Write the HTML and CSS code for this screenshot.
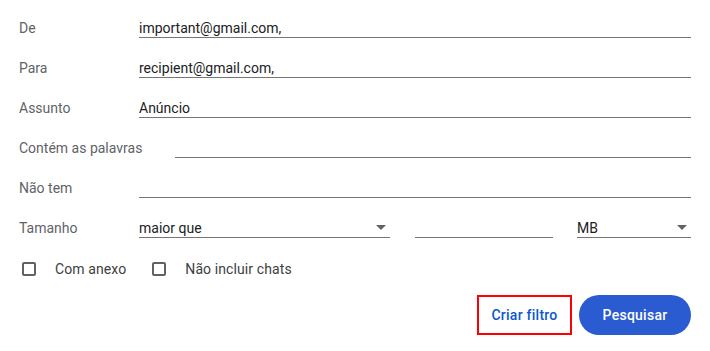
FILE: index.html
```html
<!DOCTYPE html>
<html lang="pt">

<head>
  <meta charset="UTF-8">
  <meta name="viewport" content="width=device-width, initial-scale=1.0">
  <title>Pesquisa</title>
  <link rel="stylesheet" href="styles.css">
</head>

<body>
  <form class="search">
    <div class="row">
      <label class="label" for="from">De</label>
      <input class="field" type="text" id="from" value="important@gmail.com," />
    </div>
    <div class="row">
      <label class="label" for="to">Para</label>
      <input class="field" type="text" id="to" value="recipient@gmail.com," />
    </div>
    <div class="row">
      <label class="label" for="subject">Assunto</label>
      <input class="field" type="text" id="subject" value="Anúncio" />
    </div>
    <div class="row">
      <label class="label" for="words">Contém as palavras</label>
      <input class="field" type="text" id="words" />
    </div>
    <div class="row">
      <label class="label" for="without">Não tem</label>
      <input class="field" type="text" id="without" />
    </div>
    <div class="row">
      <label class="label" for="size">Tamanho</label>
      <div class="select op">maior que<span class="arrow"></span></div>
      <input class="field size" type="text" id="size" />
      <div class="select unit">MB<span class="arrow"></span></div>
    </div>
    <div class="row checks">
      <label class="check"><span class="box"></span>Com anexo</label>
      <label class="check"><span class="box"></span>Não incluir chats</label>
    </div>
    <div class="actions">
      <button type="button" class="btn-text">Criar filtro</button>
      <button type="button" class="btn-primary">Pesquisar</button>
    </div>
  </form>
</body>

</html>
```

FILE: styles.css
```css
* {
  padding: 0;
  margin: 0;
  box-sizing: border-box;
}

body {
  font-family: Roboto, "Liberation Sans", sans-serif;
  background-color: #fff;
  color: #202124;
}

.search {
  padding: 0 19px;
}

.row {
  display: flex;
  align-items: flex-end;
  height: 40px;
}

.label {
  min-width: 120px;
  padding-right: 33px;
  padding-bottom: 4px;
  font-size: 14px;
  line-height: 16px;
  color: #5f6368;
}

.field,
.select {
  flex: 1;
  min-width: 0;
  width: 0;
  height: 18px;
  padding-bottom: 1px;
  margin-bottom: 2px;
  border: none;
  border-bottom: 1px solid #767676;
  font-family: Roboto, "Liberation Sans", sans-serif;
  font-size: 14px;
  line-height: 16px;
  color: #202124;
  background: transparent;
  outline: none;
}

.select {
  position: relative;
}

.op {
  flex: 0 0 251px;
}

.size {
  flex: 0 0 138px;
  margin-left: 25px;
}

.unit {
  flex: 0 0 114px;
  margin-left: 24px;
}

.arrow {
  position: absolute;
  right: 4px;
  top: 5px;
  border-left: 5px solid transparent;
  border-right: 5px solid transparent;
  border-top: 5px solid #5f6368;
}

.checks {
  align-items: center;
  padding-top: 18px;
  padding-left: 3px;
}

.check {
  display: flex;
  align-items: center;
  font-size: 14px;
  letter-spacing: 0.1px;
  color: #3c4043;
  margin-right: 26px;
}

.box {
  width: 14px;
  height: 14px;
  border: 2px solid #5f6368;
  border-radius: 2px;
  margin-right: 19px;
}

.actions {
  display: flex;
  justify-content: flex-end;
  align-items: center;
  gap: 7px;
  margin-top: 15px;
}

.btn-text,
.btn-primary {
  height: 40px;
  border: none;
  border-radius: 20px;
  font-family: Roboto, "Liberation Sans", sans-serif;
  font-size: 14px;
  font-weight: 500;
  letter-spacing: 0.25px;
}

.btn-text {
  width: 95px;
  background: transparent;
  color: #0b57d0;
  border-radius: 0;
  border: 2px solid #ff0000;
}

.btn-primary {
  width: 112px;
  background: #2b5bd0;
  color: #fff;
}
```
